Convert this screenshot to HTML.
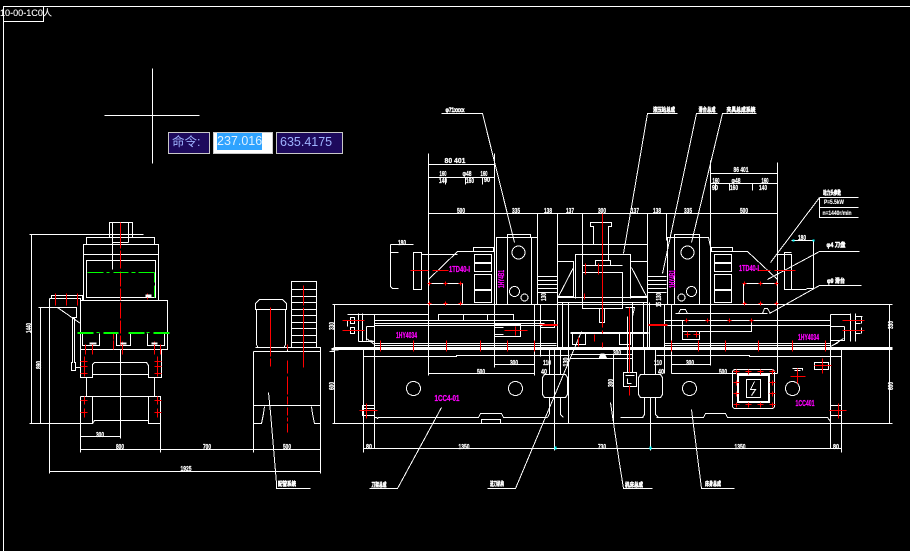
<!DOCTYPE html>
<html><head><meta charset="utf-8"><style>
html,body{margin:0;padding:0;background:#000;width:910px;height:551px;overflow:hidden}
svg{position:absolute;left:0;top:0}
.w path,.w rect,.w circle,.w line{fill:none;stroke:#fff;stroke-width:1}
.r path{fill:none;stroke:#f00;stroke-width:1}
.g path{fill:none;stroke:#0f0;stroke-width:1}
text{font-family:"Liberation Sans","Noto Sans CJK SC",sans-serif;font-size:7px;font-weight:bold;fill:#fff;stroke:#fff;stroke-width:.25;text-anchor:middle}
text.l{font-size:6px;stroke-width:.5}
text.m{fill:#f0f;stroke:#f0f;font-size:8px}
.b{position:absolute;box-sizing:border-box;border:1px solid #c8c8c8;background:#1d0a5c;color:#9fb4ff;font:12.5px/19px "Liberation Sans","Noto Sans CJK SC",sans-serif;height:22px;top:132px;outline:0;padding-left:3px;white-space:nowrap}
</style></head><body>
<svg width="910" height="551" shape-rendering="crispEdges">
<g transform="translate(.5 .5)">
<g class="w">
<path d="M3 551V6H910M3 21H43V6"/>
<path d="M152 68V163M104 115H199"/>
<!-- left view -->
<path d="M109 222H132V237H109ZM112 222V269M128 222V242M112 242H128M86 244V237H109M132 237H154V244M83 244H158V300H83ZM83 254H158M86 260H155V297H86Z"/>
<path d="M80 300H167V349H80ZM82 333V345H99V333M116 333V345H130V333M147 333V345H164V333"/>
<path d="M80 349V377H92V364L94 362H146L148 365V377H161V349M92 374H148M86 377V396M154 377V396M80 396H160V423M80 396V423H92V396M148 396V423H160M92 423L94 420H148V396"/>
<path d="M120 349V438M80 436H120M80 423V452M160 423V452M253 351V452M320 347V473M80 449H320M49 298V473M49 471H320"/>
<path d="M31 234V423M29 234H143M40 307V423M38 307H76V317H72V362H71V370H75V362H74V317M29 423H92M75 367H80M57 307L80 323"/>
<path d="M49 298H80M49 298V298M49 298H80V307M51 298V295H82V300"/>
<path d="M256 345V309H285V345M255 309V303L259 299H282L286 303V309H255ZM257 345V347H284V345M255 347H287V351M253 351H320M287 347H320V351M253 405H320"/>
<path d="M291 347V281H316V347M291 289H316M291 296H316M291 302H316M291 309H316M291 315H316M291 322H316M291 328H316M291 335H316M291 342H316"/>
<path d="M253 423H261L263 413L264 406M320 423H314L312 413L311 406"/>
<path d="M268 392L270 412L276 483L276 488H310"/>
<path d="M334 304V423M332 304H338M331 348H338M329 351H334M332 423H338"/>
<!-- main view top -->
<path d="M441 113H482L514 242M428 153V375M494 153V367M428 164H494M428 177H494M428 213H777M537 213V237M557 213V348M582 213V272M647 213V348M666 213V240M710 160V365M777 162V373M710 173H777M710 183H777"/>
<path d="M445 177V184M465 177V184M482 177V184M715 183V190M729 183V190M752 183V190"/>
<path d="M496 304V237H537V304M507 237V304M531 237V304M507 237V234H530V237"/>
<circle cx="518" cy="252" r="6.5"/><circle cx="514" cy="291" r="5"/><circle cx="524" cy="297" r="3.5"/>
<path d="M667 304V237H708L711 251M674 237V304M699 237V304M674 237V234H699V237"/>
<circle cx="687" cy="252" r="6.5"/><circle cx="691" cy="291" r="5"/><circle cx="681" cy="297" r="3.5"/>
<path d="M428 279L457 251H494M421 254H457M413 252H421V289H413ZM390 244H413M390 244V286L392 288H398M390 252H398M428 283H462V304"/>
<path d="M474 254H491V262H474ZM474 263H491V271H474ZM474 274H491V289H474ZM474 290H491V302H474ZM473 247H493V251H473Z"/>
<path d="M711 251H747L777 279M777 254H791V289H784V252H791M791 240H813V288H806M784 289H806M743 304V283H777M714 254H731V262H714ZM714 263H731V271H714ZM714 274H731V289H714ZM714 290H731V302H714ZM711 247H732V251H711Z"/>
<path d="M819 197L770 262M819 197H858M819 197V217H858M819 207H858M859 251H819L767 279M861 285H819L769 313M677 113H647L623 253M717 113H696L662 273M756 113H722L691 242M675 313H767M678 313L680 309H685L687 313M762 313L764 308H767L770 313"/>
<!-- centre -->
<path d="M590 222H611V226H608V244H593V226H590ZM557 244H647M575 298V254H630V298M582 272H622V308H582V272ZM582 265H622M595 244H608V260M595 260H610V265H595ZM599 308V322H604V308"/>
<path d="M557 261H573V296H557M573 267L558 296M630 261H647M630 261V296H647M631 267L646 296M557 297H647M557 302H647M537 276H557M537 280H557M537 284H557M537 288H557M537 292H557M647 276H666M647 280H666M647 284H666M647 288H666M647 292H666M562 302V348M568 302V423M643 302V348M649 302V348"/>
<path d="M570 332H648M570 333H648M572 333V344H585V333M619 333V344H630V333M581 331L515 488H487M570 354H632M570 358H632M613 354V423M632 302V372"/>
<path d="M625 307H634L632 316V372M627 316V372M623 372H636V386H623ZM625 375H634M627 378V383H631"/>
<path d="M544 374H565L567 377V394L565 397H544L542 394V377ZM640 374H660L662 377V394L660 397H640L638 394V377ZM549 348V374M560 348V374M644 348V374M655 348V374M549 397V413L547 417M560 397V414L563 417M644 397V414L642 417M655 397V414L658 417"/>
<!-- frame/bed -->
<path d="M332 304H892M334 304V423M332 423H892M889 304V423M374 314V448M363 348V448M363 356H456V355H569M656 355H749V356H841M841 348V448M830 342V448M554 348V450M650 397V450M363 448H841M363 444V452M841 444V452"/>
<path d="M374 314H428M438 320V314H513V320M463 314V320M487 314V320M374 320H543M374 323H544M374 325H544M374 343H556M374 345H556"/>
<path d="M374 417H376L377 418L378 417H478L480 413H501L503 417H547M481 423V419H500V423M620 417H643M656 417H703L705 413H725L727 417H827L830 421"/>
<path d="M664 304V373M671 304V373M664 320H830M664 325H830M830 314V342M682 320V339H699V331M682 331H751V320"/>
<path d="M664 343H830M664 345H830"/>
<path d="M494 324H520V336H494ZM494 327H503M494 334H503M494 364H534M428 373H534M534 304V375M540 304V356M671 364H710M671 373H777"/>
<path d="M347 314H374M358 313V341M362 313V341M358 341H374L370 340M347 320V326M350 317H354V323H350ZM350 327H354V333H350ZM366 326H374V344M366 326V340M366 338L374 344M850 313V341M855 313V341M830 314H850M855 316H862M855 323H860M855 333H860M861 316V323M861 327V333M844 326V340H830M844 326H830M838 342L830 346M843 338L832 345"/>
<circle cx="413" cy="388" r="7"/><circle cx="515" cy="388" r="7"/><circle cx="689" cy="388" r="7"/><circle cx="792" cy="388" r="7"/>
<path d="M441 407L397 488H369M610 402L619 463L623 488H652M691 409L701 488H734"/>
<path d="M732 372Q732 369 735 369H771Q774 369 774 372V405Q774 408 771 408H735Q732 408 732 405ZM746 379H760V397H746ZM754 381L750 389H755L751 395"/>
<path d="M737 374H769V402H737ZM738 375H768V401H738Z"/>
<path d="M363 408H374M362 405H374V415H362ZM830 405H841V415H830ZM814 362H828V369H814ZM797 368V383M792 368H802V370M794 370H800"/>
<path d="M540 320H554V327H540Z"/>
</g>
<path d="M333 348H892M333 347H892M333 349H892" stroke="#fff" fill="none"/>
<g class="r">
<path d="M120 222V248M120 250V268M120 271V286M120 288V300M120 302V318M120 320V333M120 335V345M55 293V305M66 293V305M77 293V305"/>
<path d="M85 344V354M92 344V354M122 341V354M154 341V354M160 344V354M113 333V339M113 340V349"/>
<path d="M84 356V376M80 361H87M80 366H87M80 373H87M157 356V376M154 361H161M154 366H161M154 373H161M84 396V404M80 400H87M157 396V404M154 400H161M84 408V417M80 412H87M154 412H161M157 408V417"/>
<path d="M270 307V356M270 358V366M303 285V305M303 307V367M287 344V349M287 360V373M287 376V394M287 396V404M287 407V415M287 417V421M287 423V432M147 293V299"/>
<path d="M602 213V327M602 330V333M602 342V347M410 270H428M432 270H448M757 270H770M774 270H795"/>
<path d="M585 263V274M598 263V274M584 293V299"/>
<path d="M539 324H557M648 324H667M542 325H557M648 325H667M342 320H364M342 330H364M842 320H864M842 330H864"/>
<path d="M380 340V351M413 340V351M446 340V351M480 340V351M507 340V351M534 340V351M671 340V351M698 340V351M725 340V351M758 340V351M792 340V351M825 340V351"/>
<path d="M359 410H377M366 403V418M829 410H846M838 403V418M814 365H831M822 358V373M790 376H805M797 368V383M504 330H527M515 326V335"/>
<path d="M629 307V372M629 385V395M578 337V346M594 334V341"/>
<path d="M427 283H431M429 281V285M443 283H447M445 281V285M458 283H462M460 281V285M427 303H431M429 301V305M443 303H447M445 301V305M458 303H462M460 301V305M742 283H746M744 281V285M758 283H762M760 281V285M774 283H778M776 281V285M742 303H746M744 301V305M758 303H762M760 301V305M774 303H778M776 301V305"/>
<path d="M684 320H688M686 318V322M705 320H709M707 318V322M727 320H731M729 318V322M749 320H753M751 318V322M684 334H690M687 331V337M693 334H699M696 331V337"/>
<path d="M733 371H739M736 369V374M745 371H751M748 369V374M757 371H763M760 369V374M769 371H775M772 369V374M733 404H739M736 402V407M745 404H751M748 402V407M757 404H763M760 402V407M769 404H775M772 402V407M733 382H739M736 380V385M769 382H775M772 380V385M733 393H739M736 391V396M769 393H775M772 391V396"/>
</g>
<g class="g">
<path d="M87 272H103M106 272H109M113 272H128M131 272H135M138 272H154M154 272V282M154 285V297M77 332H93M96 332H99M103 332H118M128 332H144M146 332H149M153 332H169"/>
<path d="M77 333H93M103 333H118M128 333H144M153 333H169"/>
</g>
<path d="M554 446h2v3h-2zM649 446h2v3h-2zM792 239h2v2h-2zM812 239h2v2h-2z" fill="#0ff"/>
<path d="M600 353L604 353L607 358H598ZM89 342h7v2h-7zM120 342h6v2h-6zM151 342h6v2h-6z" fill="#fff"/>
<path d="M331 348h7v2h-7zM145 294h6v3h-6z" fill="#fff"/>
</g>
<g lengthAdjust="spacingAndGlyphs">
<text x="26" y="16" textLength="52" lengthAdjust="spacingAndGlyphs" style="font-size:9px;font-weight:normal;stroke-width:.1">10-00-1C0人</text>
<text x="100" y="437" textLength="8" lengthAdjust="spacingAndGlyphs">300</text><text x="120" y="449" textLength="8" lengthAdjust="spacingAndGlyphs">800</text><text x="207" y="449" textLength="8" lengthAdjust="spacingAndGlyphs">700</text><text x="287" y="449" textLength="8" lengthAdjust="spacingAndGlyphs">500</text><text x="186" y="471" textLength="11" lengthAdjust="spacingAndGlyphs">1925</text>
<text transform="translate(31 328) rotate(-90)" textLength="10" lengthAdjust="spacingAndGlyphs">1440</text><text transform="translate(41 365) rotate(-90)" textLength="8" lengthAdjust="spacingAndGlyphs">890</text><text transform="translate(334 326) rotate(-90)" textLength="8" lengthAdjust="spacingAndGlyphs">330</text><text transform="translate(334 386) rotate(-90)" textLength="8" lengthAdjust="spacingAndGlyphs">600</text>
<text class="l" x="287" y="486" textLength="18" lengthAdjust="spacingAndGlyphs">配管系统</text>
<text class="l" x="455" y="112" textLength="19" lengthAdjust="spacingAndGlyphs">φ71xxxx</text><text x="455" y="163" textLength="21" lengthAdjust="spacingAndGlyphs">80 401</text><text x="443" y="176" textLength="7" lengthAdjust="spacingAndGlyphs">160</text><text x="467" y="176" textLength="9" lengthAdjust="spacingAndGlyphs">φ48</text><text x="484" y="176" textLength="7" lengthAdjust="spacingAndGlyphs">160</text><text x="443" y="183" textLength="8" lengthAdjust="spacingAndGlyphs">140</text><text x="470" y="183" textLength="8" lengthAdjust="spacingAndGlyphs">160</text><text x="487" y="182" textLength="6" lengthAdjust="spacingAndGlyphs">90</text>
<text x="461" y="213" textLength="8" lengthAdjust="spacingAndGlyphs">500</text><text x="516" y="213" textLength="8" lengthAdjust="spacingAndGlyphs">335</text><text x="548" y="213" textLength="8" lengthAdjust="spacingAndGlyphs">138</text><text x="570" y="213" textLength="8" lengthAdjust="spacingAndGlyphs">137</text><text x="602" y="213" textLength="8" lengthAdjust="spacingAndGlyphs">300</text><text x="635" y="213" textLength="8" lengthAdjust="spacingAndGlyphs">137</text><text x="657" y="213" textLength="8" lengthAdjust="spacingAndGlyphs">138</text><text x="688" y="213" textLength="8" lengthAdjust="spacingAndGlyphs">335</text><text x="744" y="213" textLength="8" lengthAdjust="spacingAndGlyphs">500</text><text x="402" y="245" textLength="8" lengthAdjust="spacingAndGlyphs">180</text><text x="802" y="240" textLength="8" lengthAdjust="spacingAndGlyphs">180</text>
<text class="l" x="664" y="112" textLength="22" lengthAdjust="spacingAndGlyphs">液压站总成</text><text class="l" x="707" y="112" textLength="17" lengthAdjust="spacingAndGlyphs">滑台总成</text><text class="l" x="741" y="112" textLength="29" lengthAdjust="spacingAndGlyphs">夹具总成系统</text>
<text x="741" y="172" textLength="15" lengthAdjust="spacingAndGlyphs">86 401</text><text x="716" y="183" textLength="7" lengthAdjust="spacingAndGlyphs">160</text><text x="736" y="183" textLength="9" lengthAdjust="spacingAndGlyphs">φ48</text><text x="765" y="183" textLength="7" lengthAdjust="spacingAndGlyphs">160</text><text x="715" y="190" textLength="6" lengthAdjust="spacingAndGlyphs">90</text><text x="734" y="190" textLength="8" lengthAdjust="spacingAndGlyphs">160</text><text x="763" y="190" textLength="8" lengthAdjust="spacingAndGlyphs">140</text>
<text class="l" x="832" y="195" textLength="18" lengthAdjust="spacingAndGlyphs">动力头参数</text><text x="834" y="204" textLength="20" lengthAdjust="spacingAndGlyphs" style="font-size:6px;stroke-width:.1">P=5.5kW</text><text x="837" y="215" textLength="29" lengthAdjust="spacingAndGlyphs" style="font-size:6px;stroke-width:.1">n=1440r/min</text><text class="l" x="836" y="247" textLength="19" lengthAdjust="spacingAndGlyphs">φ4 刀盘</text><text class="l" x="836" y="283" textLength="18" lengthAdjust="spacingAndGlyphs">φ9 滑台</text>
<text x="514" y="365" textLength="8" lengthAdjust="spacingAndGlyphs">300</text><text x="481" y="374" textLength="8" lengthAdjust="spacingAndGlyphs">500</text><text x="547" y="365" textLength="8" lengthAdjust="spacingAndGlyphs">110</text><text x="544" y="374" textLength="6" lengthAdjust="spacingAndGlyphs">40</text><text x="658" y="365" textLength="8" lengthAdjust="spacingAndGlyphs">110</text><text x="661" y="374" textLength="6" lengthAdjust="spacingAndGlyphs">40</text><text x="690" y="365" textLength="8" lengthAdjust="spacingAndGlyphs">300</text><text x="723" y="374" textLength="8" lengthAdjust="spacingAndGlyphs">500</text><text x="617" y="355" textLength="8" lengthAdjust="spacingAndGlyphs">300</text>
<text x="369" y="449" textLength="6" lengthAdjust="spacingAndGlyphs">80</text><text x="464" y="449" textLength="11" lengthAdjust="spacingAndGlyphs">1350</text><text x="602" y="449" textLength="8" lengthAdjust="spacingAndGlyphs">730</text><text x="740" y="449" textLength="11" lengthAdjust="spacingAndGlyphs">1350</text><text x="836" y="449" textLength="6" lengthAdjust="spacingAndGlyphs">80</text>
<text class="l" x="379" y="487" textLength="15" lengthAdjust="spacingAndGlyphs">刀架总成</text><text class="l" x="497" y="486" textLength="14" lengthAdjust="spacingAndGlyphs">进刀机构</text><text class="l" x="634" y="487" textLength="18" lengthAdjust="spacingAndGlyphs">机床总成</text><text class="l" x="713" y="486" textLength="16" lengthAdjust="spacingAndGlyphs">床身总成</text>
<text transform="translate(546 297) rotate(-90)" textLength="8" lengthAdjust="spacingAndGlyphs">130</text><text transform="translate(661 300) rotate(-90)" textLength="14" lengthAdjust="spacingAndGlyphs">15 130</text><text transform="translate(893 325) rotate(-90)" textLength="8" lengthAdjust="spacingAndGlyphs">330</text><text transform="translate(893 386) rotate(-90)" textLength="8" lengthAdjust="spacingAndGlyphs">600</text><text transform="translate(613 383) rotate(-90)" textLength="8" lengthAdjust="spacingAndGlyphs">300</text><text transform="translate(568 362) rotate(-90)" textLength="9" lengthAdjust="spacingAndGlyphs">130</text>
<text class="m" x="459.5" y="272" textLength="21" lengthAdjust="spacingAndGlyphs">1TD40-I</text><text class="m" x="749" y="271" textLength="20" lengthAdjust="spacingAndGlyphs">1TD40-I</text>
<text class="m" transform="translate(504 279) rotate(-90)" textLength="18" lengthAdjust="spacingAndGlyphs">1HY4B1</text><text class="m" transform="translate(675 279) rotate(-90)" textLength="18" lengthAdjust="spacingAndGlyphs">1HY4B1</text>
<text class="m" x="406.5" y="338" textLength="21" lengthAdjust="spacingAndGlyphs">1HY4034</text><text class="m" x="808.5" y="340" textLength="21" lengthAdjust="spacingAndGlyphs">1HY4034</text><text class="m" x="447" y="401" textLength="25" lengthAdjust="spacingAndGlyphs">1CC4-01</text><text class="m" x="805" y="406" textLength="19" lengthAdjust="spacingAndGlyphs">1CC401</text>
</g>
</svg>
<div class="b" style="left:168px;width:42px">命令:</div>
<div class="b" style="left:213px;width:60px;background:#fff;padding-left:3px"><span style="background:#2fa3ff;color:#dff0ff;display:inline-block;width:45px;overflow:hidden;line-height:17px">237.016</span></div>
<div class="b" style="left:276px;width:67px">635.4175</div>
</body></html>
